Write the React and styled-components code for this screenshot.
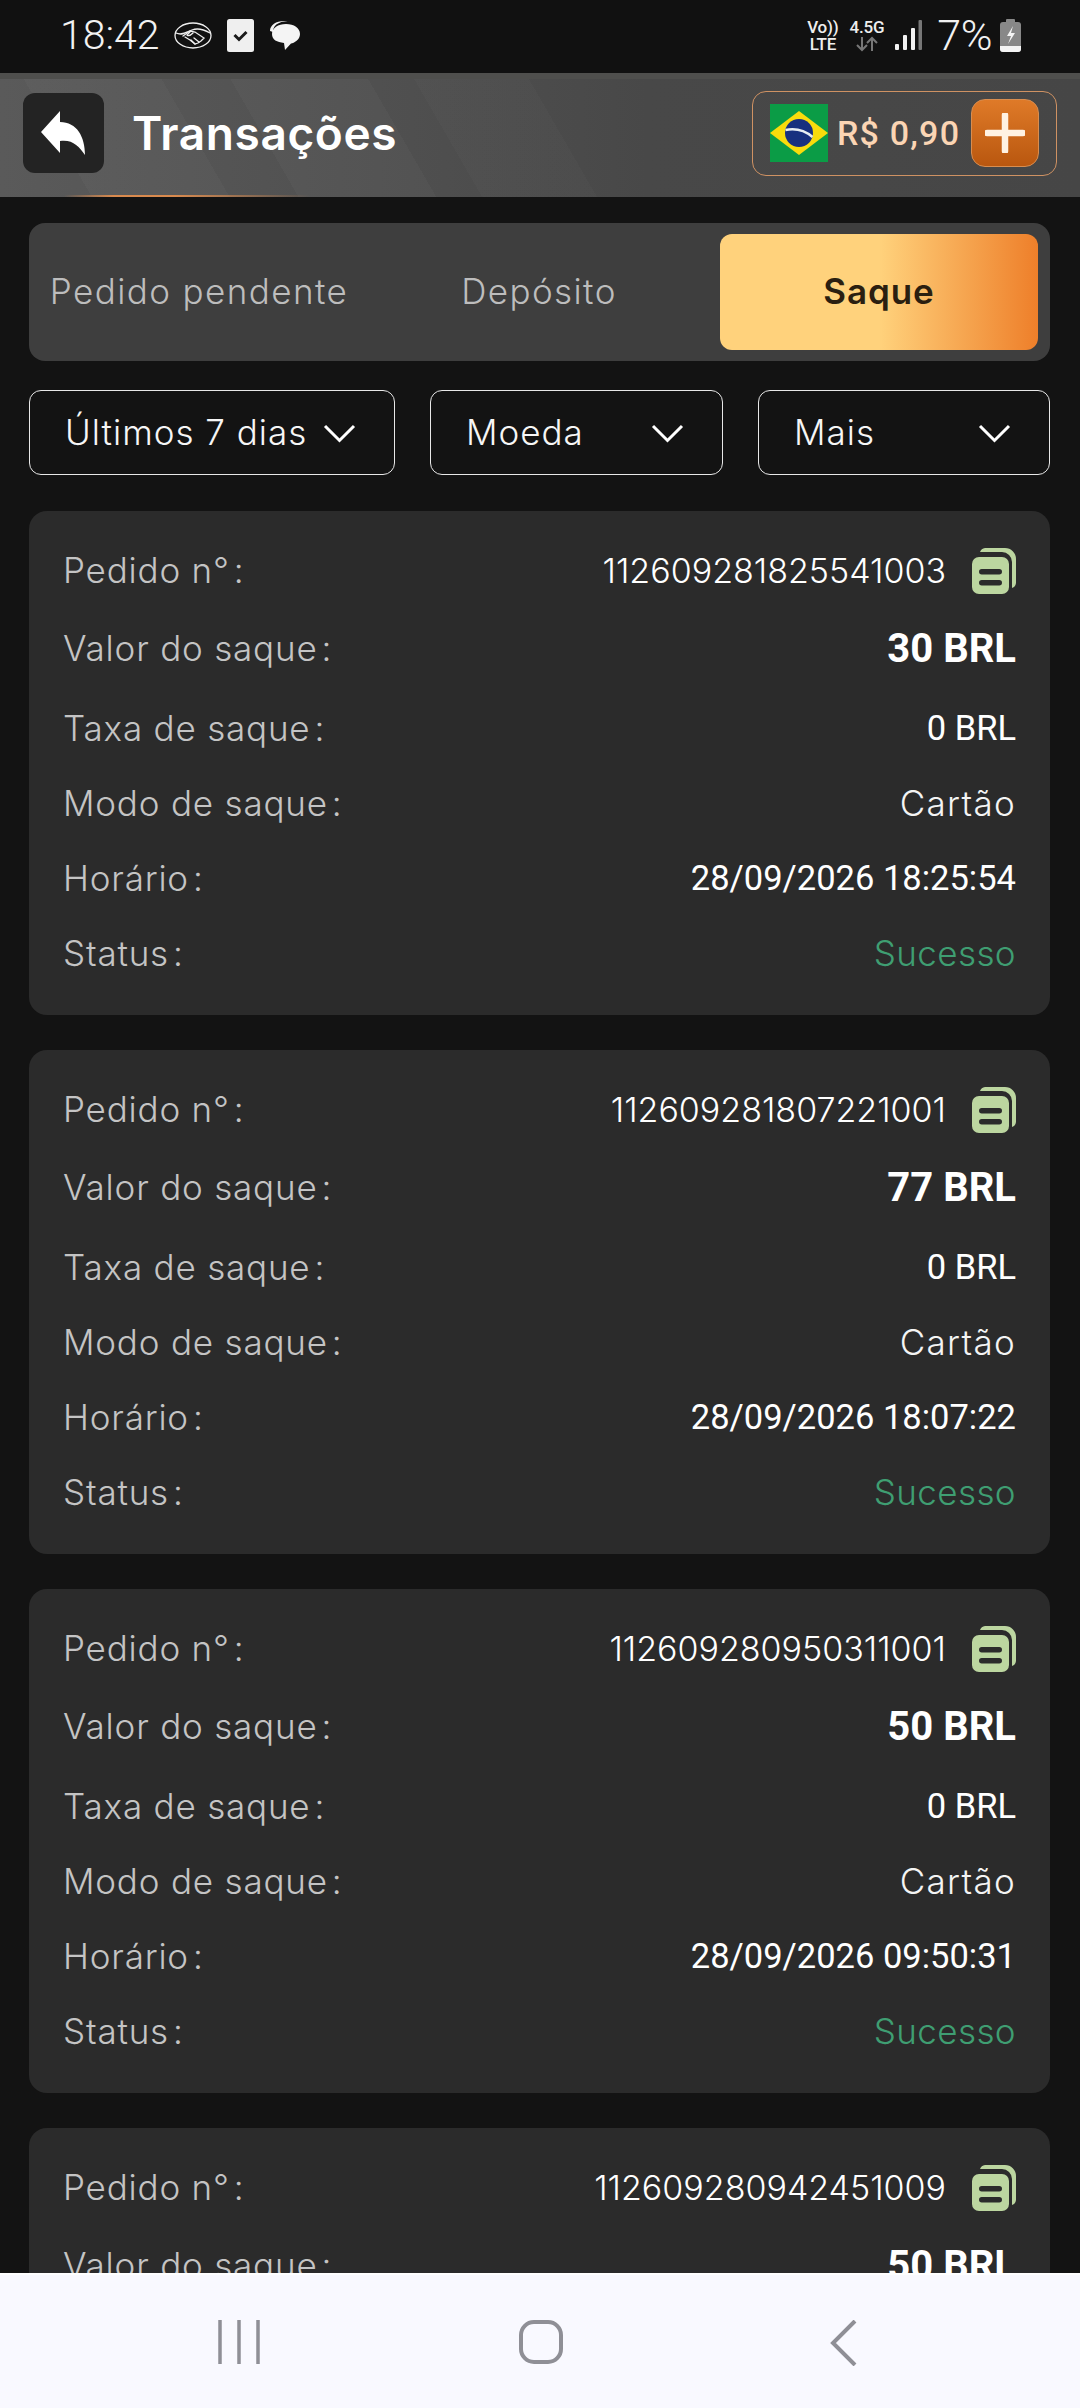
import React from "react";
import styled, { createGlobalStyle } from "styled-components";

const Global = createGlobalStyle`
  html, body { margin: 0; padding: 0; background: #131313; }
  * { box-sizing: border-box; }
`;
const SANS = `Inter, "Open Sans", "Liberation Sans", sans-serif`;
const ROBOTO = `Roboto, "Liberation Sans", sans-serif`;

const Screen = styled.div`
  width: 1080px; height: 2408px; display: flex; flex-direction: column;
  background: #131313; overflow: hidden; font-family: ${SANS};
`;
const StatusBar = styled.div`
  height: 73px; flex: none; background: #111; color: #f2f2f2; display: flex;
  align-items: center; justify-content: space-between; padding: 0 59px 2px 60px;
  font-family: ${ROBOTO};
`;
const StatusGroup = styled.div`display: flex; align-items: center; gap: ${p => p.$gap || 0}px;`;
const Clock = styled.span`font-size: 41px; font-weight: 300; margin-right: -1px; line-height: 1;`;
const Percent = styled.span`font-size: 43px; font-weight: 300; line-height: 1; letter-spacing: -.5px; margin: 0 -3px 0 4px;`;
const NetStack = styled.div`display: flex; flex-direction: column; align-items: center; color: #eee;`;
const NetLine = styled.div`font-size: 17px; font-weight: 500; line-height: 17px; height: 17px; letter-spacing: -.2px;`;

const Header = styled.header`
  height: 124px; flex: none; position: relative; display: flex; align-items: center;
  justify-content: space-between; padding: 0 23px 10px 23px;
  border-top: 6px solid #4f4f4d;
  background:
    linear-gradient(60deg, transparent 0 8%, rgba(255,255,255,.025) 8% 20%, transparent 20% 26%, rgba(255,255,255,.025) 26% 38%, transparent 38% 42%, rgba(255,255,255,.015) 42% 52%, transparent 52%),
    linear-gradient(90deg, #5a5a5a 0%, #505050 35%, #484848 60%, #464646 100%);
  &::after {
    content: ""; position: absolute; left: 64px; bottom: 0; width: 246px; height: 2px;
    background: linear-gradient(90deg, transparent, #d98a4e 20%, #d98a4e 45%, transparent);
  }
`;
const HeaderLeft = styled.div`display: flex; align-items: center; gap: 28px;`;
const BackButton = styled.div`
  width: 81px; height: 80px; border-radius: 12px; background: #232323;
  display: flex; align-items: center; justify-content: center;
`;
const Title = styled.h1`
  margin: 0; font-size: 46px; font-weight: 600; color: #fff; letter-spacing: .6px; line-height: 1;
`;
const Balance = styled.div`
  width: 305px; height: 85px; border: 1.5px solid #cf9263; border-radius: 14px;
  display: flex; align-items: center; padding: 0 17px; gap: 9px;
`;
const Amount = styled.span`
  font-family: ${ROBOTO}; font-weight: 500; font-size: 34px; letter-spacing: 1.2px;
  color: #fbd5b4; white-space: nowrap; line-height: 1;
`;
const AddButton = styled.div`
  width: 68px; height: 68px; margin-left: auto; border-radius: 14px; border: 1.5px solid #d98d4f;
  background: linear-gradient(180deg, #df7a28, #b9570f);
  display: flex; align-items: center; justify-content: center;
`;

const Content = styled.main`
  flex: 1; min-height: 0; overflow: hidden; padding: 26px 30px 0 29px;
`;
const Tabs = styled.div`
  height: 138px; border-radius: 16px; background: #3e3e3e; padding: 11px;
  display: grid; grid-template-columns: repeat(3, 318px); gap: 22px;
`;
const Tab = styled.div`
  display: flex; align-items: center; justify-content: center; border-radius: 12px;
  font-size: 35px; white-space: nowrap; line-height: 1; padding-bottom: 2px;
  letter-spacing: ${p => (p.$active ? 0.9 : 1.4)}px;
  color: ${p => (p.$active ? "#2b1f10" : "#bdbdbd")};
  font-weight: ${p => (p.$active ? 600 : 300)};
  background: ${p => (p.$active ? "linear-gradient(90deg, #ffd27c 0%, #ffd27c 50%, #ee7f2a 100%)" : "transparent")};
`;
const Filters = styled.div`
  margin-top: 29px; display: grid; grid-template-columns: 366px 293px 292px; gap: 35px;
`;
const Filter = styled.div`
  height: 85px; border: 1.5px solid #e8e8e8; border-radius: 12px; display: flex; align-items: center;
  justify-content: space-between; padding: 0 38px 0 35px; color: #f6f6f6;
  font-size: 35px; font-weight: 300; white-space: nowrap; line-height: 1; letter-spacing: 1px;
`;
const Cards = styled.div`margin-top: 36px; display: flex; flex-direction: column; gap: 35px;`;
const Card = styled.section`
  flex: none; height: 504px; border-radius: 18px; background: #2b2b2b; padding: 22px 34px 24px;
`;
const Row = styled.div`
  height: 75px; display: flex; align-items: center; justify-content: space-between;
  margin-bottom: ${p => p.$after || 0}px;
`;
const Label = styled.span`font-size: 35px; font-weight: 300; color: #c4c4c4; line-height: 1; letter-spacing: .8px;`;
const Colon = styled.span`margin-left: 4px;`;
const OrderValue = styled.div`display: flex; align-items: center; gap: 26px;`;
const OrderNo = styled.span`font-size: 34px; font-weight: 300; color: #fff; line-height: 1;`;
const Value = styled.span`
  font-family: ${ROBOTO}; color: #fff; line-height: 1;
  font-size: ${p => (p.$big ? 40 : 34.5)}px; font-weight: ${p => (p.$big ? 700 : 400)};
`;
const TextValue = styled.span`
  font-size: 35px; font-weight: 300; line-height: 1; letter-spacing: ${p => p.$spacing}px;
  color: ${p => p.$color || "#f4f4f4"};
`;

const NavBar = styled.nav`
  height: 135px; flex: none; position: relative; z-index: 1; background: #f9f9ff; border-top: 2px solid #fff;
`;
const NavSlot = styled.div`
  position: absolute; top: 45px; left: ${p => p.$x}px;
`;

const Handshake = () => (
  <svg width="38" height="27" viewBox="0 0 38 27" fill="none" stroke="#eee" strokeWidth="1.3" strokeLinecap="round">
    <ellipse cx="19" cy="13.500" rx="18" ry="12.500" />
    <path d="M2 11c6 3 11-1 16-3s11-1 18 3" />
    <path d="M9 14l7-5 5 1 9 6-3 3-3 2-3 1-5-4-5-3" />
    <path d="M20 16l5 4M17 18l4 4M16 10l-3 3c2 2 4 0 6-2" />
  </svg>
);
const CheckBox = () => (
  <svg width="27" height="33" viewBox="0 0 27 33">
    <rect x="0" y="0" width="27" height="33" rx="2.500" fill="#efefef" />
    <path d="M7.500 16l4.500 4.500L19.500 13" fill="none" stroke="#1a1a1a" strokeWidth="3" />
  </svg>
);
const Bubble = () => (
  <svg width="32" height="31" viewBox="0 0 32 31">
    <path d="M1 11C1 5 7 1 15 1h7c-9 0-18 2-18 11z" fill="#f2f2f2" />
    <path d="M3 14C3 8 9 4 17 4s14 4 14 10-6 9-9 9.500L16 30l-1-7C8 22 3 20 3 14z" fill="#f4f4f4" />
  </svg>
);
const Signal = () => (
  <svg width="27" height="31" viewBox="0 0 27 31">
    <rect x="0" y="24" width="4" height="6" rx="1" fill="#f2f2f2" />
    <rect x="8" y="15" width="4" height="15" rx="1" fill="#f2f2f2" />
    <rect x="16" y="8" width="4" height="22" rx="1" fill="#f2f2f2" />
    <rect x="23.500" y="0" width="3.500" height="30" rx="1" fill="#777" />
  </svg>
);
const Battery = () => (
  <svg width="21" height="33" viewBox="0 0 21 33">
    <rect x="6" y="0" width="9" height="4" rx="1" fill="#888" />
    <rect x="0" y="3" width="21" height="30" rx="3" fill="#888" />
    <path d="M0 27h21v3a3 3 0 0 1-3 3H3a3 3 0 0 1-3-3z" fill="#f4f4f4" />
    <path d="M13 7l-6 10h4l-3 8 7-11h-4z" fill="#f4f4f4" />
  </svg>
);
const Arrows = () => (
  <svg width="24" height="16" viewBox="0 0 24 16" fill="none" stroke="#777" strokeWidth="2">
    <path d="M7 1v13M2 9l5 5 5-5M17 15V2M12 7l5-5 5 5" />
  </svg>
);
const ReplyIcon = () => (
  <svg width="45" height="44" viewBox="0 0 45 44"><path d="M19 0L0 21l19 21V30c12-2 19 5 25 14C44 26 36 11 19 11z" fill="#fff" /></svg>
);
const Flag = () => (
  <svg width="58" height="58" viewBox="0 0 58 58" style={{ flex: "none" }}>
    <rect width="58" height="58" fill="#0b9c46" />
    <path d="M29 7L58 29 29 51 0 29z" fill="#f8dc0c" />
    <circle cx="29" cy="29" r="14" fill="#17307f" />
    <path d="M15.500 26c10-2 20 1 27 7" stroke="#e8eef2" strokeWidth="2.500" fill="none" />
  </svg>
);
const Plus = () => (
  <svg width="40" height="40" viewBox="0 0 40 40"><path d="M20 2v36M2 20h36" stroke="#fff2e2" strokeWidth="6.500" strokeLinecap="round" /></svg>
);
const Chevron = () => (
  <svg width="33" height="20" viewBox="0 0 33 20" fill="none" style={{ flex: "none" }}>
    <path d="M2 3l14.500 14.500L31 3" stroke="#fff" strokeWidth="3" />
  </svg>
);
const CopyIcon = () => (
  <svg width="44" height="46" viewBox="0 0 44 46" style={{ flex: "none" }}>
    <path d="M13 0h20a11 11 0 0 1 11 11v24a6 6 0 0 1-4 5V14A10 10 0 0 0 30 4H8a6 6 0 0 1 5-4z" fill="#bcd6a0" />
    <rect x="0" y="9" width="37" height="37" rx="7" fill="#bcd6a0" />
    <rect x="7" y="21" width="23" height="5.500" rx="2.750" fill="#2b2b2b" />
    <rect x="7" y="32" width="23" height="5.500" rx="2.750" fill="#2b2b2b" />
  </svg>
);

const orders = [
  { id: "112609281825541003", amount: "30 BRL", time: "28/09/2026 18:25:54" },
  { id: "112609281807221001", amount: "77 BRL", time: "28/09/2026 18:07:22" },
  { id: "112609280950311001", amount: "50 BRL", time: "28/09/2026 09:50:31" },
  { id: "112609280942451009", amount: "50 BRL", partial: true },
];

const Field = ({ children }) => <Label>{children}<Colon>:</Colon></Label>;

export default function App() {
  return (
    <Screen>
      <Global />
      <StatusBar>
        <StatusGroup $gap={15}>
          <Clock>18:42</Clock>
          <Handshake />
          <CheckBox />
          <Bubble />
        </StatusGroup>
        <StatusGroup $gap={11}>
          <NetStack><NetLine>Vo))</NetLine><NetLine>LTE</NetLine></NetStack>
          <NetStack><NetLine>4.5G</NetLine><Arrows /></NetStack>
          <Signal />
          <Percent>7%</Percent>
          <Battery />
        </StatusGroup>
      </StatusBar>
      <Header>
        <HeaderLeft>
          <BackButton><ReplyIcon /></BackButton>
          <Title>Transações</Title>
        </HeaderLeft>
        <Balance>
          <Flag />
          <Amount>R$ 0,90</Amount>
          <AddButton><Plus /></AddButton>
        </Balance>
      </Header>
      <Content>
        <Tabs>
          <Tab>Pedido pendente</Tab>
          <Tab>Depósito</Tab>
          <Tab $active>Saque</Tab>
        </Tabs>
        <Filters>
          <Filter>Últimos 7 dias<Chevron /></Filter>
          <Filter>Moeda<Chevron /></Filter>
          <Filter>Mais<Chevron /></Filter>
        </Filters>
        <Cards>
          {orders.map(o => (
            <Card key={o.id}>
              <Row $after={3}><Field>Pedido n°</Field><OrderValue><OrderNo>{o.id}</OrderNo><CopyIcon /></OrderValue></Row>
              <Row $after={5}><Field>Valor do saque</Field><Value $big>{o.amount}</Value></Row>
              {!o.partial && (
                <>
                  <Row><Field>Taxa de saque</Field><Value>0 BRL</Value></Row>
                  <Row><Field>Modo de saque</Field><TextValue $spacing={1.3}>Cartão</TextValue></Row>
                  <Row><Field>Horário</Field><Value>{o.time}</Value></Row>
                  <Row><Field>Status</Field><TextValue $spacing={0.4} $color="#3f9e72">Sucesso</TextValue></Row>
                </>
              )}
            </Card>
          ))}
        </Cards>
      </Content>
      <NavBar>
        <NavSlot $x={218}>
          <svg width="44" height="44" viewBox="0 0 44 44" stroke="#8f8f96" strokeWidth="3.500" fill="none"><path d="M2 0v44M21 0v44M40 0v44" /></svg>
        </NavSlot>
        <NavSlot $x={519}>
          <svg width="44" height="44" viewBox="0 0 44 44" fill="none"><rect x="2" y="2" width="40" height="40" rx="13" stroke="#8f8f96" strokeWidth="4" /></svg>
        </NavSlot>
        <NavSlot $x={830}>
          <svg width="28" height="46" viewBox="0 0 28 46" fill="none"><path d="M25 1L3 23l22 22" stroke="#8f8f96" strokeWidth="4" /></svg>
        </NavSlot>
      </NavBar>
    </Screen>
  );
}
